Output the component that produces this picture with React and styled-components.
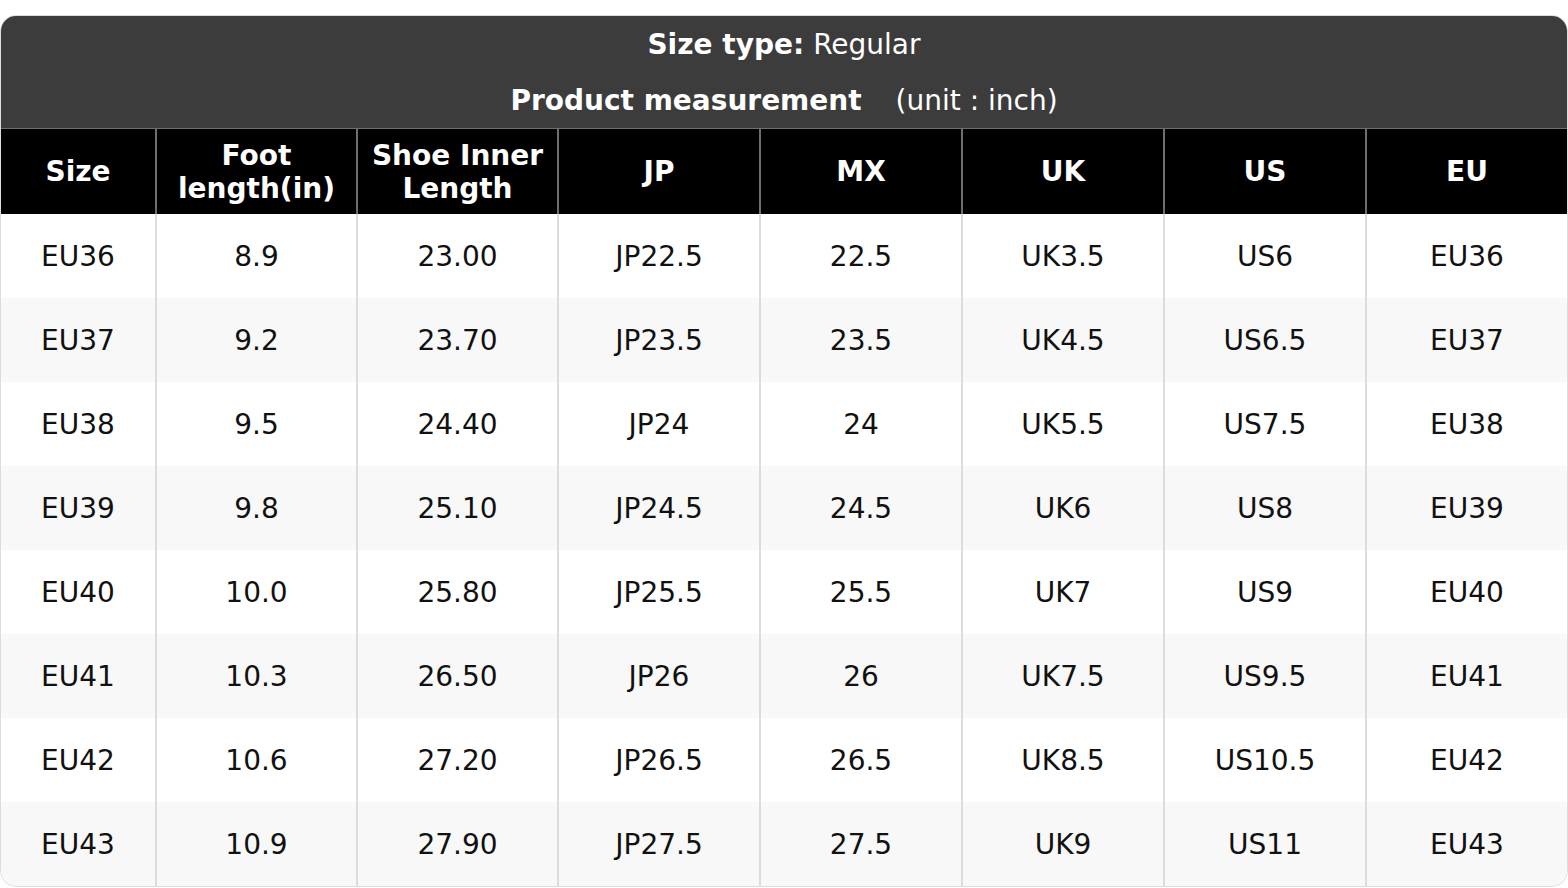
import React from 'react'
import styled, { createGlobalStyle } from 'styled-components'

const Global = createGlobalStyle`
    html, body {
        margin: 0;
        padding: 0;
        background: #ffffff;
        font-family: "DejaVu Sans", "Liberation Sans", sans-serif;
    }
`

const Page = styled.div`
    padding-top: 15px;
`

const Card = styled.div`
    border: 1px solid #dcdcdc;
    border-radius: 16px;
    overflow: hidden;
    background: #ffffff;
`

const Banner = styled.div`
    background-color: #3c3c3c;
    color: #ffffff;
    display: flex;
    flex-direction: column;
    align-items: center;
`

const BannerLine = styled.div`
    height: 56px;
    display: flex;
    align-items: center;
    font-size: 28px;
    white-space: pre;
`

const Bold = styled.b`
    font-weight: bold;
`

const Unit = styled.span`
    margin-left: ${props => props.gap || 0}px;
`

const Table = styled.div`
    display: grid;
    grid-template-columns: 154px 201px 201px 202px 202px 202px 202px 1fr;
`

const HeadCell = styled.div`
    background: #000000;
    color: #ffffff;
    font-weight: bold;
    font-size: 28px;
    line-height: 33px;
    height: 85px;
    border-top: 1px solid #6e6e6e;
    border-left: ${props => (props.first ? 'none' : '2px solid #6e6e6e')};
    display: flex;
    align-items: center;
    justify-content: center;
    text-align: center;
    white-space: pre-line;
`

const Cell = styled.div`
    background: ${props => (props.odd ? '#f8f8f8' : '#ffffff')};
    color: #111111;
    font-size: 28px;
    height: 84px;
    border-left: ${props => (props.first ? 'none' : '2px solid #dcdcdc')};
    display: flex;
    align-items: center;
    justify-content: center;
`

const headers = ['Size', 'Foot\nlength(in)', 'Shoe Inner\nLength', 'JP', 'MX', 'UK', 'US', 'EU']

const rows = [
    ['EU36', '8.9', '23.00', 'JP22.5', '22.5', 'UK3.5', 'US6', 'EU36'],
    ['EU37', '9.2', '23.70', 'JP23.5', '23.5', 'UK4.5', 'US6.5', 'EU37'],
    ['EU38', '9.5', '24.40', 'JP24', '24', 'UK5.5', 'US7.5', 'EU38'],
    ['EU39', '9.8', '25.10', 'JP24.5', '24.5', 'UK6', 'US8', 'EU39'],
    ['EU40', '10.0', '25.80', 'JP25.5', '25.5', 'UK7', 'US9', 'EU40'],
    ['EU41', '10.3', '26.50', 'JP26', '26', 'UK7.5', 'US9.5', 'EU41'],
    ['EU42', '10.6', '27.20', 'JP26.5', '26.5', 'UK8.5', 'US10.5', 'EU42'],
    ['EU43', '10.9', '27.90', 'JP27.5', '27.5', 'UK9', 'US11', 'EU43']
]

const App = () => {
    return (
        <Page>
            <Global />
            <Card>
                <Banner>
                    <BannerLine>
                        <Bold>Size type:</Bold>
                        <Unit gap={9}>Regular</Unit>
                    </BannerLine>
                    <BannerLine>
                        <Bold>Product measurement</Bold>
                        <Unit gap={34}>(unit : inch)</Unit>
                    </BannerLine>
                </Banner>
                <Table>
                    {headers.map((h, i) => (
                        <HeadCell key={h} first={i === 0}>
                            {h}
                        </HeadCell>
                    ))}
                    {rows.map((row, r) =>
                        row.map((v, i) => (
                            <Cell key={r + '-' + i} first={i === 0} odd={r % 2 === 1}>
                                {v}
                            </Cell>
                        ))
                    )}
                </Table>
            </Card>
        </Page>
    )
}

export default App
